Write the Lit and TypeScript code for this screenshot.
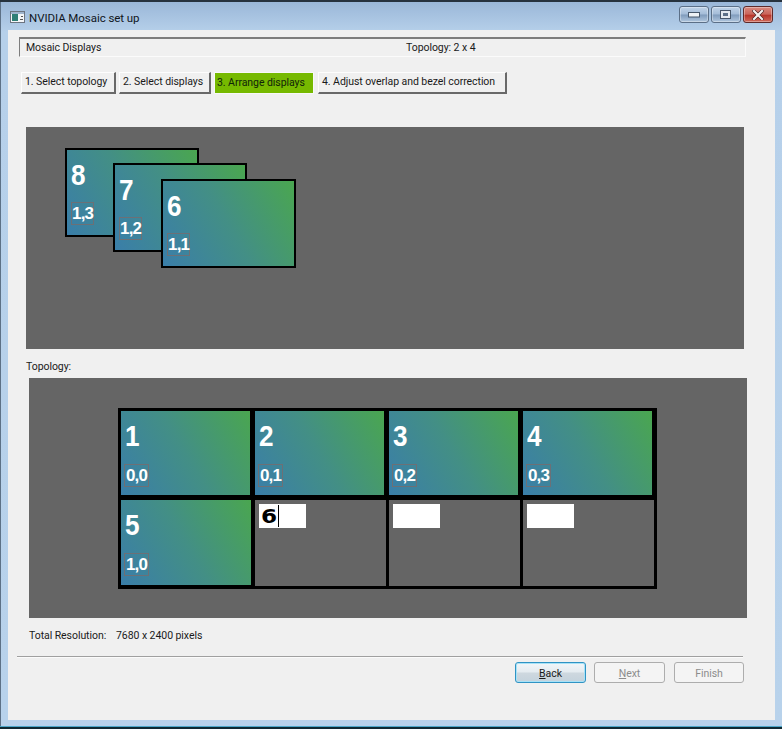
import { LitElement, html, css } from "lit";
import { customElement } from "lit/decorators.js";

const card = (cls: string, n: string, pos: string) => html`
  <div class="disp ${cls}">
    <div class="num">${n}</div>
    <div class="pos">${pos}</div>
  </div>`;

@customElement("app-root")
export class AppRoot extends LitElement {
  static styles = css`
    :host { display: block; width: 782px; height: 729px; overflow: hidden; }
    * { box-sizing: border-box; }
    .window {
      width: 782px; height: 729px; display: flex; flex-direction: column;
      padding: 2px 7px 7px 8px;
      background: linear-gradient(to bottom, #9ab7d8 0, #b6d0ea 30px, #b8d2eb 100%);
      border-top: 2px solid #26323e;
      box-shadow: inset 1px 0 0 #5d7186;
      position: relative;
      font-family: "Roboto", "Open Sans", sans-serif;
      font-size: 10.5px; color: #1a1a1a; letter-spacing: -.06px;
    }
    .window::after {
      content: ""; position: absolute; left: 0; right: 0; bottom: 0; height: 3px;
      background: linear-gradient(to bottom, #4da7c8 0, #4da7c8 1px, #0f2a33 1px);
    }
    .title { height: 26px; display: flex; align-items: center; padding: 0 0 0 2px; flex: none; }
    .ticon { width: 15px; height: 12px; margin-right: 4px; flex: none; }
    .ttext { font-size: 11.5px; color: #10151c; flex: 1; padding-top: 1px; }
    .ctrls { display: flex; gap: 2px; margin: -5px 2px 0 0; }
    .ctrl {
      width: 30px; height: 17px; border: 1px solid #5b6f87; border-radius: 3px;
      display: flex; align-items: center; justify-content: center;
      background: linear-gradient(to bottom, #c0d3e8 0, #a4bcd8 48%, #7f9bbc 52%, #b0c6de 100%);
      box-shadow: inset 0 0 0 1px rgba(255,255,255,.35);
    }
    .ctrl.close {
      border-color: #5e2a2a;
      background: linear-gradient(to bottom, #d98a80 0, #c9645a 48%, #b8352a 55%, #cf6a5c 100%);
    }
    .client {
      flex: 1; background: #f0f0f0; display: flex; flex-direction: column; align-items: flex-start; margin-bottom: 2px;
    }
    .group {
      margin: 7px 0 0 11px; width: 727px; height: 20px; display: flex; align-items: center;
      border-style: solid; border-width: 2px 1px 1px 1px;
      border-color: #7d7d7d #fbfbfb #fbfbfb #7d7d7d; padding: 0 0 0 6px;
    }
    .group .l { width: 380px; }
    .steps { display: flex; margin: 15px 0 0 13px; height: 22px; white-space: nowrap; }
    .step {
      height: 22px; display: flex; align-items: center; padding: 0 0 2px 3px; margin-right: 3px;
      background: #f0f0f0; border-style: solid; border-width: 1px 2px 2px 1px;
      border-color: #fdfdfd #696969 #696969 #fdfdfd;
    }
    .s1 { width: 95px; }
    .s2 { width: 92px; }
    .s3 { width: 100px; background: #76b900; border-color: #f8f8f8; border-width: 1px; margin-right: 4px; padding-left: 2px; color: #10240a; }
    .s4 { width: 189px; }
    .canvas {
      position: relative; margin: 33px 0 0 18px; width: 718px; height: 222px; background: #656565; flex: none;
    }
    .disp {
      border: 2px solid #000; overflow: hidden;
      background: linear-gradient(60deg, #3a7ea9 0%, #438f85 50%, #4aa650 100%);
      color: #fff; font-family: "Liberation Sans", Arial, sans-serif; font-weight: 700;
      display: flex; flex-direction: column; align-items: flex-start;
    }
    .canvas .disp { position: absolute; width: 134px; height: 89px; padding: 0 0 0 4px; }
    .d8 { left: 39px; top: 21px; }
    .d7 { left: 87px; top: 36px; }
    .canvas .d6 { left: 135px; top: 52px; width: 135px; }
    .num { font-size: 29px; line-height: 30px; margin: 10px 0 0 0; height: 30px; transform: scaleX(.9); transform-origin: left; }
    .pos {
      margin-top: 12px; width: 23px; height: 23px; border: 1px solid #6c7076; font-size: 17px; line-height: 21px;
      text-align: center; white-space: nowrap; letter-spacing: -.8px;
    }
    .tlabel { margin: 11px 0 0 18px; height: 18px; line-height: 13px; }
    .board {
      margin-left: 21px; width: 718px; height: 240px; background: #656565; padding: 30px 0 0 89px; flex: none;
    }
    .grid { width: 539px; height: 181px; background: #000; padding: 3px; display: flex; flex-direction: column; gap: 5px; }
    .row { display: flex; }
    .top { gap: 5px; height: 84px; }
    .top .disp { width: 129px; height: 84px; border: 0; padding-left: 3px; }
    .bot { gap: 3px; height: 86px; }
    .bot .disp { width: 130px; height: 85px; border: 0; padding-left: 3px; margin-right: 1px; }
    .top .num, .bot .num { margin: 10px 0 0 1px; }
    .top .pos, .bot .pos { margin-top: 13px; width: 25px; }
    .slot { width: 131px; height: 86px; background: #656565; padding: 4px; }
    .edit { width: 47px; height: 24px; background: #fff; display: flex; align-items: center; padding-left: 2px; color: #000; }
    .glyph { font-family: "DejaVu Sans", sans-serif; font-weight: 700; font-size: 19px; line-height: 24px; display: inline-block; width: 17px; transform: scaleX(1.22); transform-origin: left; }
    .caret { width: 1px; height: 22px; background: #000; }
    .total { margin: 11px 0 0 21px; height: 16px; line-height: 14px; display: flex; white-space: nowrap; }
    .total .k { width: 87px; }
    .sep { margin: 11px 0 0 9px; width: 726px; height: 2px; border-top: 1px solid #a0a0a0; border-bottom: 1px solid #fbfbfb; flex: none; }
    .btns { display: flex; margin: 4px 0 0 507px; }
    .btn {
      height: 21px; width: 71px; border: 1px solid #adadad; border-radius: 3px; display: flex; align-items: center; justify-content: center;
      background: #f4f4f4; color: #8c8c8c; padding-top: 1px;
    }
    .back {
      border-color: #2f93c4; color: #1a1a1a; margin-right: 8px;
      background: linear-gradient(to bottom, #f2f6f9 0, #e4ebf0 48%, #ced8df 52%, #c4d2dc 100%);
      box-shadow: inset 0 0 0 1px #a8e2f7;
    }
    .next { margin-right: 9px; }
    .finish { width: 70px; }
    u { text-underline-offset: 1px; }
  `;

  render() {
    return html`
      <div class="window">
        <div class="title">
          <svg class="ticon" viewBox="0 0 15 12">
            <rect x=".5" y=".5" width="14" height="11" fill="#f4f6f8" stroke="#6c7480"/>
            <rect x="1" y="1" width="13" height="2" fill="#9fb4cc"/>
            <rect x="2" y="3" width="6" height="7" fill="#2f7f76"/>
            <rect x="11" y="5" width="2" height="1" fill="#555"/>
            <rect x="10" y="8" width="3" height="1" fill="#555"/>
          </svg>
          <div class="ttext">NVIDIA Mosaic set up</div>
          <div class="ctrls">
            <div class="ctrl">
              <svg width="12" height="6" viewBox="0 0 12 6"><rect x=".5" y=".5" width="11" height="4.5" fill="#eef2f6" stroke="#46566a"/></svg>
            </div>
            <div class="ctrl">
              <svg width="12" height="10" viewBox="0 0 12 10"><rect x=".5" y=".5" width="10" height="8" fill="#e4eaf0" stroke="#46566a"/><rect x="3" y="3" width="5" height="3" fill="#5c7088"/></svg>
            </div>
            <div class="ctrl close">
              <svg width="12" height="10" viewBox="0 0 12 10"><path d="M2 1 L10 9 M10 1 L2 9" stroke="#4a2020" stroke-width="3.4" stroke-linecap="square"/><path d="M2 1 L10 9 M10 1 L2 9" stroke="#f6efee" stroke-width="2.2" stroke-linecap="square"/></svg>
            </div>
          </div>
        </div>
        <div class="client">
          <div class="group"><span class="l">Mosaic Displays</span><span>Topology: 2 x 4</span></div>
          <div class="steps">
            <div class="step s1">1. Select topology</div>
            <div class="step s2">2. Select displays</div>
            <div class="step s3">3. Arrange displays</div>
            <div class="step s4">4. Adjust overlap and bezel correction</div>
          </div>
          <div class="canvas">
            ${card("d8", "8", "1,3")}
            ${card("d7", "7", "1,2")}
            ${card("d6", "6", "1,1")}
          </div>
          <div class="tlabel">Topology:</div>
          <div class="board">
            <div class="grid">
              <div class="row top">
                ${card("", "1", "0,0")}
                ${card("", "2", "0,1")}
                ${card("", "3", "0,2")}
                ${card("", "4", "0,3")}
              </div>
              <div class="row bot">
                ${card("", "5", "1,0")}
                <div class="slot"><div class="edit"><span class="glyph">6</span><span class="caret"></span></div></div>
                <div class="slot"><div class="edit"></div></div>
                <div class="slot"><div class="edit"></div></div>
              </div>
            </div>
          </div>
          <div class="total"><span class="k">Total Resolution:</span><span>7680 x 2400 pixels</span></div>
          <div class="sep"></div>
          <div class="btns">
            <div class="btn back"><span><u>B</u>ack</span></div>
            <div class="btn next"><span><u>N</u>ext</span></div>
            <div class="btn finish">Finish</div>
          </div>
        </div>
      </div>
    `;
  }
}
